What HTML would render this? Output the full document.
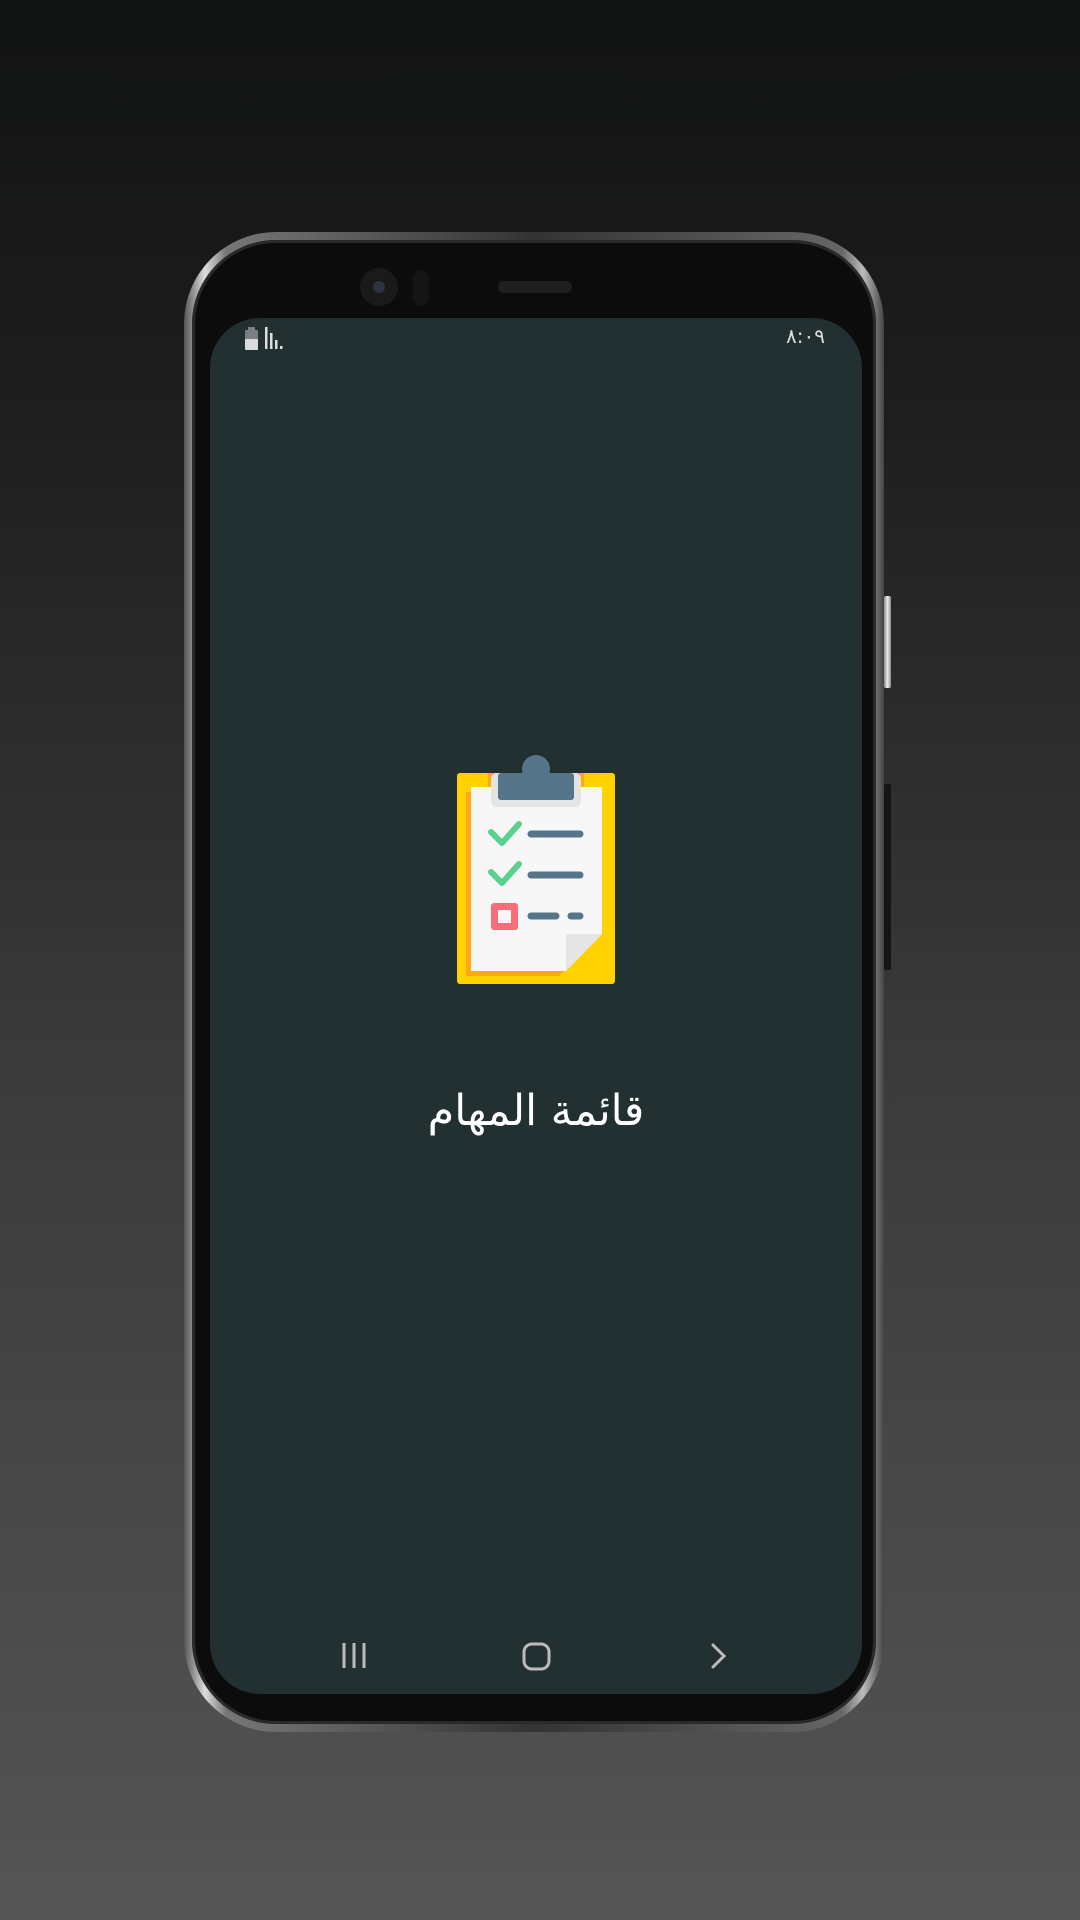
<!DOCTYPE html>
<html><head><meta charset="utf-8"><style>
html,body{margin:0;padding:0}
body{width:1080px;height:1920px;background:linear-gradient(#121313 0%,#1c1d1c 20%,#3a3a3a 55%,#555 100%);position:relative;overflow:hidden;font-family:"Liberation Sans","DejaVu Sans",sans-serif}
.rim{position:absolute;left:184px;top:232px;width:700px;height:1500px;border-radius:92px;background:linear-gradient(90deg,#555,#ddd 3%,#777 6%,#333 50%,#666 94%,#bbb 97%,#444);}
.bez{position:absolute;left:192px;top:240px;width:684px;height:1484px;border-radius:84px;background:#0c0c0c;box-shadow:inset 0 0 0 3px #2a2a2a}
.scr{position:absolute;left:210px;top:318px;width:652px;height:1376px;border-radius:50px;background:#223031;overflow:hidden}
.btn1{position:absolute;left:884px;top:596px;width:7px;height:92px;background:linear-gradient(90deg,#888,#eee,#888);border-radius:2px}
.btn2{position:absolute;left:884px;top:784px;width:7px;height:186px;background:#151515;border-radius:2px}
.cam{position:absolute;left:360px;top:268px;width:38px;height:38px;border-radius:50%;background:#1a1a1a}
.cam:after{content:"";position:absolute;left:13px;top:13px;width:12px;height:12px;border-radius:50%;background:#2d3340}
.sens{position:absolute;left:413px;top:270px;width:16px;height:36px;border-radius:8px;background:#151515}
.spk{position:absolute;left:498px;top:281px;width:74px;height:12px;border-radius:6px;background:#1f1f1f}
.title{position:absolute;left:0;width:652px;top:768px;text-align:center;color:#fff;font-size:43px;font-family:"DejaVu Sans",sans-serif;direction:rtl}
.time{position:absolute;right:37px;top:6px;color:#ddd;font-size:20px;font-family:"DejaVu Sans",sans-serif}
</style></head><body>
<div class="rim"></div><div class="bez"></div>
<div class="btn1"></div><div class="btn2"></div>
<div class="cam"></div><div class="sens"></div><div class="spk"></div>
<div class="scr">
 <svg style="position:absolute;left:0;top:0" width="652" height="1376">
  <rect x="35" y="12" width="13" height="20" rx="1.5" fill="#7a7f84"/><rect x="38" y="9" width="7" height="4" fill="#7a7f84"/><rect x="35" y="21" width="13" height="11" rx="1" fill="#d8dadc"/>
  <rect x="55" y="9" width="2.5" height="22" fill="#ddd"/><rect x="60" y="15" width="2.5" height="16" fill="#ddd"/><rect x="65" y="22" width="2.5" height="9" fill="#ddd"/><rect x="70" y="28" width="2.5" height="3" fill="#ddd"/>
  <g transform="translate(-210,-318)">
   <rect x="457" y="773" width="158" height="211" rx="3" fill="#ffd200"/>
   <rect x="488" y="773" width="96" height="14" fill="#ffa912"/>
   <path d="M466 792 L466 976 L559 976 L596 940 L596 792 Z" fill="#ffa912"/>
   <path d="M471 787 L602 787 L602 934 L566 971 L471 971 Z" fill="#f7f7f7"/>
   <path d="M566 971 L566 934 L602 934 Z" fill="#e5e5e5"/>
   <rect x="491" y="773" width="90" height="34" rx="6" fill="#e4e4e4"/>
   <circle cx="536" cy="769" r="14" fill="#55758b"/>
   <rect x="498" y="773" width="76" height="27" rx="3" fill="#55758b"/>
   <path d="M491 832 L502 843 L519 824" stroke="#5bd18f" stroke-width="6" fill="none" stroke-linecap="round" stroke-linejoin="round"/>
   <path d="M491 872 L502 883 L519 864" stroke="#5bd18f" stroke-width="6" fill="none" stroke-linecap="round" stroke-linejoin="round"/>
   <rect x="491" y="903" width="27" height="27" rx="3" fill="#fb6b78"/><rect x="498" y="910" width="13" height="13" fill="#f7f7f7"/>
   <path d="M531 834 H580 M531 875 H580 M531 916 H556 M571 916 H580" stroke="#55758b" stroke-width="7" stroke-linecap="round"/>
  </g>
  <g stroke="#bbb" stroke-width="3" fill="none">
   <path d="M134 1325 V1350 M144 1325 V1350 M154 1325 V1350"/>
   <rect x="314" y="1326" width="25" height="25" rx="8"/>
   <path d="M503 1327 L514 1338 L503 1349" stroke-linecap="round"/>
  </g>
 </svg>
 <div class="time">٨:٠٩</div>
 <div class="title">قائمة المهام</div>
</div>
</body></html>
